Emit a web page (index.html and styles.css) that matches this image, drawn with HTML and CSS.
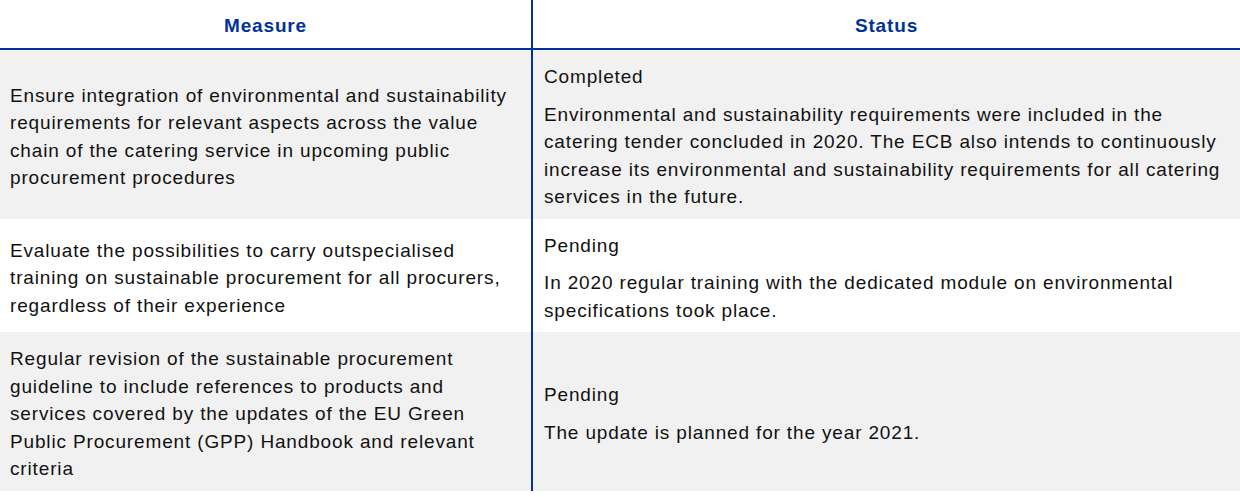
FILE: index.html
```html
<!DOCTYPE html>
<html lang="en">
<head>
<meta charset="utf-8">
<title>Measures</title>
<link rel="stylesheet" href="styles.css">
</head>
<body>
<table class="measures">
  <colgroup>
    <col class="col-measure">
    <col class="col-status">
  </colgroup>
  <thead>
    <tr>
      <th class="head head-measure">Measure</th>
      <th class="head">Status</th>
    </tr>
  </thead>
  <tbody>
    <tr class="row shaded">
      <td class="cell measure">Ensure integration of environmental and sustainability requirements for relevant aspects across the value chain of the catering service in upcoming public procurement procedures</td>
      <td class="cell status">
        <p class="state">Completed</p>
        <p class="note">Environmental and sustainability requirements were included in the catering tender concluded in 2020. The ECB also intends to continuously increase its environmental and sustainability requirements for all catering services in the future.</p>
      </td>
    </tr>
    <tr class="row">
      <td class="cell measure">Evaluate the possibilities to carry outspecialised training on sustainable procurement for all procurers, regardless of their experience</td>
      <td class="cell status">
        <p class="state">Pending</p>
        <p class="note">In 2020 regular training with the dedicated module on environmental specifications took place.</p>
      </td>
    </tr>
    <tr class="row shaded">
      <td class="cell measure">Regular revision of the sustainable procurement guideline to include references to products and services covered by the updates of the EU Green Public Procurement (GPP) Handbook and relevant criteria</td>
      <td class="cell status">
        <p class="state">Pending</p>
        <p class="note">The update is planned for the year 2021.</p>
      </td>
    </tr>
  </tbody>
</table>
</body>
</html>
```

FILE: styles.css
```css
html, body {
  margin: 0;
  padding: 0;
  background: #ffffff;
}

body {
  font-family: "Liberation Sans", Arial, sans-serif;
  font-size: 19px;
  letter-spacing: 0.85px;
  color: #111111;
}

.measures {
  width: 1240px;
  border-collapse: collapse;
  table-layout: fixed;
}

.col-measure {
  width: 532px;
}

.head {
  padding: 3px 0 0;
  line-height: 45px;
  color: #003299;
  font-weight: bold;
  font-size: 19px;
  text-align: center;
  vertical-align: middle;
  border-bottom: 2px solid #003299;
}

.head-measure {
  border-right: 2px solid #003299;
}

.row.shaded {
  background: #f1f1f1;
}

.cell {
  padding: 13px 10px 8px;
  line-height: 27.5px;
  vertical-align: middle;
  text-align: left;
}

.cell.measure {
  border-right: 2px solid #003299;
  padding-right: 14px;
}

.cell.status {
  padding-left: 11px;
  padding-right: 8px;
}

.state,
.note {
  margin: 0;
}

.state {
  margin-bottom: 10px;
}
```
